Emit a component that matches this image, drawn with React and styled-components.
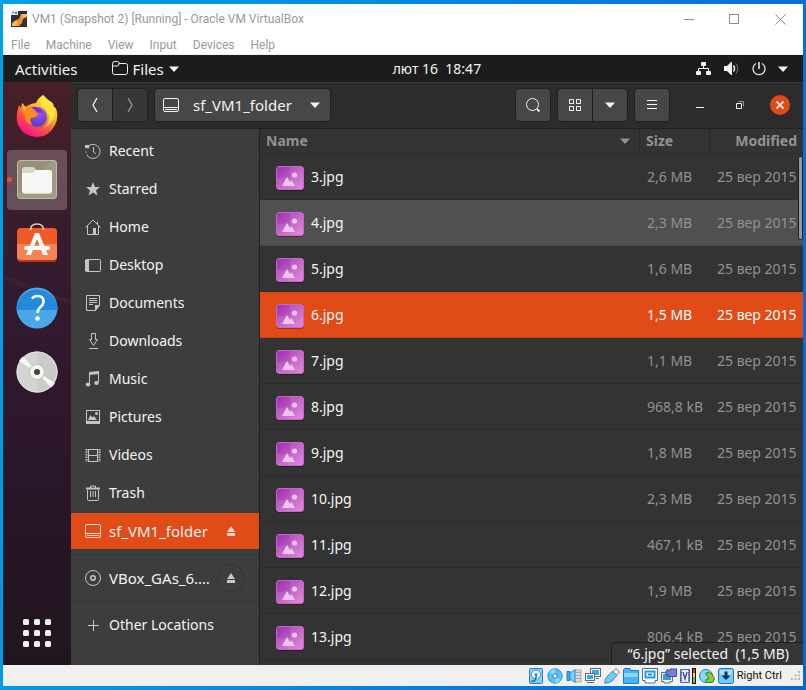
import React from 'react';
import styled, { createGlobalStyle } from 'styled-components';

const GlobalStyle = createGlobalStyle`
  *, *::before, *::after { box-sizing: border-box; }
  html, body, #root { height: 100%; }
  body { margin: 0; overflow: hidden; }
  button { font: inherit; color: inherit; background: none; border: 0; padding: 0; margin: 0; }
  a { color: inherit; text-decoration: none; }
  svg { display: block; flex: none; }
`;

const guestFont = '"Noto Sans", "Open Sans", sans-serif';
const hostFont = 'Roboto, "Open Sans", sans-serif';

/* ---------- Host desktop and window ---------- */

const Desktop = styled.div`
  height: 100vh;
  display: flex;
  padding: 4px 3px;
  background: linear-gradient(100deg, #00a2e8 0%, #0092e4 30%, #0878dc 70%, #0668cc 100%);
`;

const HostWindow = styled.main`
  flex: 1;
  min-width: 0;
  display: flex;
  flex-direction: column;
  background: #fff;
`;

const TitleBar = styled.header`
  display: flex;
  align-items: center;
  height: 30px;
  padding-left: 8px;
  gap: 5px;
  font-family: ${hostFont};
  font-size: 12px;
  color: #999;
`;

const Title = styled.h1`
  flex: 1;
  margin: 0;
  font-size: 12px;
  font-weight: 400;
  white-space: nowrap;
`;

const CaptionButtons = styled.div`
  display: flex;
  align-self: stretch;
`;

const CaptionButton = styled.button`
  width: 46px;
  display: flex;
  align-items: center;
  justify-content: center;
  color: #8c8c8c;
`;

const MenuBar = styled.nav`
  display: flex;
  align-items: center;
  gap: 16px;
  height: 21px;
  padding: 1px 0 0 8px;
  border-bottom: 1px solid #f0f0f0;
  font-family: ${hostFont};
  font-size: 12px;
  color: #999;
`;

/* ---------- Guest top panel ---------- */

const Guest = styled.section`
  flex: 1;
  min-height: 0;
  display: flex;
  flex-direction: column;
  font-family: ${guestFont};
  font-size: 14px;
  line-height: 20px;
  color: #f2f2f2;
`;

const TopPanel = styled.div`
  display: grid;
  grid-template-columns: 16fr auto 13fr;
  align-items: center;
  height: 27px;
  padding: 0 15px 0 12px;
  background: #1c1c1c;
`;

const PanelGroup = styled.div`
  display: flex;
  align-items: center;
  gap: ${(p) => p.$gap}px;
  justify-content: ${(p) => (p.$end ? 'flex-end' : 'flex-start')};
  font-size: 15px;
`;

const PanelButton = styled.button`
  display: flex;
  align-items: center;
  gap: 5px;
  white-space: pre;
`;

const GuestBody = styled.div`
  flex: 1;
  min-height: 0;
  display: flex;
`;

/* ---------- Dock ---------- */

const Dock = styled.nav`
  width: 68px;
  flex: none;
  display: flex;
  flex-direction: column;
  align-items: center;
  gap: 4px;
  padding: 4px 0 2px;
  background:
    linear-gradient(200deg, transparent 36%, rgba(120, 50, 60, 0.25) 36%, transparent 37%),
    linear-gradient(#472026 0%, #341b2f 32%, #2c172c 60%, #20151e 100%);
`;

const DockItem = styled.button`
  position: relative;
  width: 60px;
  height: 60px;
  display: flex;
  align-items: center;
  justify-content: center;
  border-radius: 4px;
  background: ${(p) => (p.$active ? 'rgba(255, 255, 255, 0.22)' : 'transparent')};
  margin-top: ${(p) => (p.$last ? 'auto' : 0)};
`;

const RunningDot = styled.span`
  position: absolute;
  left: 0;
  top: 50%;
  width: 5px;
  height: 5px;
  margin-top: -3px;
  border-radius: 50%;
  background: #e95420;
`;

/* ---------- File manager ---------- */

const FileManager = styled.div`
  flex: 1;
  min-width: 0;
  display: flex;
  flex-direction: column;
  background: #333;
`;

const HeaderBar = styled.div`
  display: flex;
  align-items: center;
  height: 47px;
  padding: 0 13px 2px 6px;
  gap: 6px;
  background: #2c2c2c;
  border-top: 1px solid #3b3b3b;
  border-bottom: 1px solid #212121;
`;

const ButtonGroup = styled.div`
  display: flex;
  border: 1px solid #202020;
  border-radius: 5px;
  overflow: hidden;
  background: #202020;
  gap: 1px;
`;

const ToolButton = styled.button`
  display: flex;
  align-items: center;
  justify-content: center;
  width: 34px;
  height: 32px;
  background: ${(p) => (p.$dim ? '#373737' : '#474747')};
  color: ${(p) => (p.$dim ? '#999' : '#f4f4f4')};
`;

const PathButton = styled.button`
  display: flex;
  align-items: center;
  width: 175px;
  height: 32px;
  padding: 0 10px 0 8px;
  gap: 14px;
  background: #474747;
  font-size: 15px;
`;

const PathLabel = styled.span`
  flex: 1;
  text-align: left;
`;

const Spacer = styled.span`
  flex: 1;
`;

const WindowControls = styled.div`
  display: flex;
  align-items: center;
  gap: 20px;
  padding-left: 14px;
`;

const ControlButton = styled.button`
  display: flex;
  align-items: center;
  justify-content: center;
  width: 20px;
  height: 20px;
  border-radius: 50%;
  background: ${(p) => (p.$close ? '#e04b17' : 'transparent')};
`;

const Content = styled.div`
  flex: 1;
  min-height: 0;
  display: flex;
`;

const Sidebar = styled.nav`
  width: 189px;
  flex: none;
  display: flex;
  flex-direction: column;
  gap: 2px;
  padding-top: 4px;
  background: #3d3d3d;
  border-right: 1px solid #212121;
`;

const Place = styled.div`
  display: flex;
  align-items: center;
  height: 36px;
  padding: 0 14px;
  background: ${(p) => (p.$selected ? '#e04b17' : 'transparent')};
  color: ${(p) => (p.$selected ? '#ffd9cc' : '#c6c6c6')};
  font-size: ${(p) => (p.$mounted ? 15 : 14)}px;
`;

const PlaceLink = styled.a`
  flex: 1;
  min-width: 0;
  display: flex;
  align-items: center;
  gap: 8px;
`;

const PlaceName = styled.span`
  color: #f4f4f4;
  white-space: nowrap;
`;

const EjectButton = styled.button`
  width: 28px;
  height: 28px;
  flex: none;
  display: flex;
  align-items: center;
  justify-content: center;
  border-radius: 50%;
  border: 1px solid ${(p) => (p.$outlined ? '#333' : 'transparent')};
`;

const Separator = styled.hr`
  width: 100%;
  height: 1px;
  margin: 3px 0;
  border: 0;
  background: #343434;
`;

const ListPane = styled.div`
  position: relative;
  flex: 1;
  min-width: 0;
  overflow: hidden;
`;

const FileTable = styled.table`
  width: 100%;
  table-layout: fixed;
  border-collapse: separate;
  border-spacing: 0;
`;

const HeadCell = styled.th`
  width: ${(p) => (p.$width ? `${p.$width}px` : 'auto')};
  height: 25px;
  padding: 0 6px;
  text-align: ${(p) => (p.$right ? 'right' : 'left')};
  font-weight: 700;
  color: #929292;
  border-bottom: 1px solid #2a2a2a;
  border-left: ${(p) => (p.$divided ? '1px solid #2a2a2a' : '0')};
`;

const HeadInner = styled.span`
  display: flex;
  align-items: center;
  justify-content: space-between;
  padding-right: 3px;
`;

const FileRow = styled.tr`
  background: ${(p) => ({ hover: '#505050', selected: '#e04b17' }[p.$state] || '#333')};
  --meta: ${(p) => (p.$state === 'selected' ? '#fff' : '#929292')};
`;

const Cell = styled.td`
  height: 46px;
  padding: ${(p) => (p.$name ? '0 16px' : '0 7px 0 8px')};
  text-align: ${(p) => (p.$right ? 'right' : 'left')};
  white-space: nowrap;
  color: ${(p) => (p.$name ? '#f6f6f6' : 'var(--meta)')};
  border-bottom: 1px solid rgba(0, 0, 0, 0.12);
`;

const FileName = styled.span`
  display: flex;
  align-items: center;
  gap: 7px;
`;

const ScrollThumb = styled.div`
  position: absolute;
  top: 27px;
  right: 0;
  width: 5px;
  height: 84px;
  border: 1px solid #1f1f1f;
  border-radius: 3px;
  background: #999;
`;

const FloatingStatus = styled.div`
  position: absolute;
  right: 0;
  bottom: 0;
  height: 23px;
  padding: 0 14px 0 15px;
  background: #353535;
  border: 1px solid #1f1f1f;
  border-width: 1px 0 0 1px;
  border-top-left-radius: 5px;
  line-height: 22px;
  white-space: pre;
`;

/* ---------- Host status bar ---------- */

const StatusBar = styled.footer`
  display: flex;
  align-items: center;
  justify-content: flex-end;
  height: 21px;
  gap: 3px;
  padding-right: 2px;
  background: #f0f0f0;
  font-family: ${hostFont};
  font-size: 11px;
  color: #111;
`;

const HostKey = styled.span`
  margin-right: 6px;
  white-space: nowrap;
`;

/* ---------- Icons ---------- */

const Svg = ({ w = 16, h = w, children, ...rest }) => (
  <svg width={w} height={h} viewBox={`0 0 ${w} ${h}`} fill="none" stroke="currentColor" aria-hidden="true" {...rest}>
    {children}
  </svg>
);

const Triangle = () => (
  <Svg w={10} h={6} stroke="none" fill="currentColor"><path d="M0 .5h10L5 6z" /></Svg>
);

const VmIcon = () => (
  <Svg w={16} stroke="none">
    <rect width="16" height="16" fill="#2b303b" />
    <path d="M10 3h6v3l-4 2-1 4-3 3H1v-3l4-3 3-1z" fill="#f7902b" />
    <path d="M11 3h5v2l-4 2zM1 14l3-4 3 1-2 4H1z" fill="#ffc15c" />
    <path d="M0 0h7v4H0z" fill="#e5e5e5" />
    <path d="M1 1h2v1H1zM4 1h2v2H4z" fill="#777" />
  </Svg>
);

const FolderOutline = () => (
  <Svg w={16} h={15}>
    <path d="M.5 4.500v-2a2 2 0 0 1 2-2h3a1.500 1.500 0 0 1 1.500 1.500v.5h6.500a2 2 0 0 1 2 2v7a2 2 0 0 1-2 2h-11a2 2 0 0 1-2-2zM.5 5h4.500q2 0 2-2.500" />
  </Svg>
);

const NetworkIcon = () => (
  <Svg w={16} h={14} fill="currentColor">
    <g stroke="none"><rect x="5" width="5" height="4" rx="1" /><rect y="9" width="5" height="4" rx="1" /><rect x="10" y="9" width="5" height="4" rx="1" /></g>
    <path d="M7.500 4v3M2.500 9V6.500h10V9" fill="none" />
  </Svg>
);

const VolumeIcon = () => (
  <Svg w={16} h={14}>
    <path d="M0 4h3l4-4h1v13H7L3 9H0z" fill="currentColor" stroke="none" />
    <path d="M9.500 3.500q2 3 0 6" strokeWidth="1.500" />
    <path d="M12 1.500q3.500 5 0 10" stroke="#777" />
  </Svg>
);

const PowerIcon = () => (
  <Svg w={14} h={14}><path d="M4 1.500a6 6 0 1 0 6 0" strokeWidth="1.200" /><path d="M7 0v7" strokeWidth="1.500" /></Svg>
);

const Chevron = ({ right }) => (
  <Svg w={8} h={16}><path d={right ? 'M2 1l4 7-4 7' : 'M6 1L2 8l4 7'} strokeWidth="1.300" /></Svg>
);

const DriveIcon = () => (
  <Svg w={16}>
    <rect x=".5" y="1.500" width="15" height="13" rx="1.500" />
    <path d="M1 10.500h14M2 12.500h12" />
  </Svg>
);

const SearchIcon = () => (
  <Svg w={16}><circle cx="7.500" cy="7.500" r="6" /><path d="M12 12l2.500 2.500" strokeWidth="1.800" /></Svg>
);

const GridIcon = () => (
  <Svg w={12}>
    <path d="M.5.5h4v4h-4zM7.500.5h4v4h-4zM.5 7.500h4v4h-4zM7.500 7.500h4v4h-4z" />
  </Svg>
);

const MenuIcon = () => (
  <Svg w={12} h={11}><path d="M1 1.500h10M1 5.500h10M1 9.500h10" /></Svg>
);

const placeIcons = {
  recent: (
    <Svg><path d="M2.200 4.500A7 7 0 1 1 1 8.500" strokeDasharray="36 2" /><path d="M8.500 4v5l2.500 2" /><path d="M0 2l4.500 0L4 5.500 0 5z" fill="currentColor" stroke="none" /></Svg>
  ),
  starred: (
    <Svg stroke="none" fill="currentColor"><path d="M8 1l2 5h5l-4 3.400 1.500 5L8 11.500l-4.500 2.900L5 9.400 1 6h5z" /></Svg>
  ),
  home: (
    <Svg><path d="M.5 8.500L8 1l7.500 7.500M2.500 7v8.500h11V7M12.500 5V2.500" /><path d="M8 9h3v6H8z" fill="currentColor" stroke="none" /></Svg>
  ),
  desktop: (
    <Svg><rect x=".5" y="2.500" width="15" height="12" rx="1" /><path d="M0 3h4v11H0z" fill="currentColor" stroke="none" /></Svg>
  ),
  documents: (
    <Svg><path d="M1.500.5h13v10l-4 5h-9z" /><path d="M4 3.500h8M4 5.500h8M4 7.500h8M4 9.500h4" /><path d="M10 10h5l-5 6z" fill="currentColor" stroke="none" /></Svg>
  ),
  downloads: (
    <Svg><path d="M6.500.5h4v6h2l-4 6-4-6h2zM4 15.500h9" /></Svg>
  ),
  music: (
    <Svg><path d="M4.500 13V3l9-1.500V11" /><path d="M4 1l10-1v3L4 4z" fill="currentColor" stroke="none" /><ellipse cx="3" cy="13.500" rx="2.300" ry="2" fill="currentColor" stroke="none" /><ellipse cx="11.500" cy="12" rx="2.300" ry="2" fill="currentColor" stroke="none" /></Svg>
  ),
  pictures: (
    <Svg><rect x="1.500" y="1.500" width="13" height="12" /><path d="M1 12h14v3H1zM3 11l2.500-5 2 2.500L9 7l3 4z" fill="currentColor" stroke="none" /><circle cx="11.500" cy="4.500" r="1.500" fill="currentColor" stroke="none" /></Svg>
  ),
  videos: (
    <Svg><path d="M3.500 2v13M12.500 2v13M3 2.500h10M3 8.500h10M3 14.500h10" /><path d="M1.500 2v13M14.500 2v13" strokeWidth="2" strokeDasharray="1.500 1" /></Svg>
  ),
  trash: (
    <Svg><path d="M2.500 5v9.500a1 1 0 0 0 1 1h9a1 1 0 0 0 1-1V5" /><path d="M1 3.500h14" strokeWidth="2" /><path d="M5.500 3V1h5v2M5.500 6v6M8 6v6M10.500 6v6" /></Svg>
  ),
  drive: <DriveIcon />,
  disc: (
    <Svg><circle cx="8" cy="8" r="7.500" /><circle cx="8" cy="8" r="2.200" strokeWidth="1.600" /></Svg>
  ),
  plus: (
    <Svg><path d="M3 8.500h11M8.500 3v11" /></Svg>
  ),
};

const EjectIcon = () => (
  <Svg w={8} h={10} stroke="none" fill="currentColor"><path d="M4 0l4 6H0zM0 7h8v3H0z" /></Svg>
);

const ImageIcon = () => (
  <Svg w={28} h={28} stroke="none">
    <defs>
      <linearGradient id="thumb" x1="0" y1="0" x2="1" y2="1"><stop offset="0" stopColor="#9c2fae" /><stop offset="1" stopColor="#e080da" /></linearGradient>
    </defs>
    <rect x="0" y="3" width="28" height="25" rx="3" fill="#000" opacity=".3" />
    <rect x=".5" y="3.500" width="27" height="23" rx="2.500" fill="url(#thumb)" stroke="#c566c8" />
    <path d="M14 4h13v22H14zM1 15h26v11H1z" fill="#fff" opacity=".09" />
    <path d="M6 23l5-9 3 5 1.500-2 3.500 6z" fill="#ecc6ea" />
    <circle cx="18.500" cy="12" r="2.600" fill="#ecc6ea" />
  </Svg>
);

const FirefoxIcon = () => (
  <Svg w={42} h={42} stroke="none">
    <defs>
      <linearGradient id="fox" x1=".8" y1=".05" x2=".25" y2=".95"><stop offset="0" stopColor="#fff14a" /><stop offset=".35" stopColor="#ffb52c" /><stop offset=".65" stopColor="#ff5640" /><stop offset="1" stopColor="#f5108e" /></linearGradient>
      <radialGradient id="globe" cx=".65" cy=".25" r=".8"><stop offset="0" stopColor="#a552f5" /><stop offset="1" stopColor="#4b3ec2" /></radialGradient>
    </defs>
    <path d="M27 0q3 4 7 6t4 6q2 0 3 5 1 8-2 13-6 12-18 12Q8 42 2.500 31-1 23 2 14l1-4 2 3 1-5 3 4q7-4 11-4 2-5 7-8z" fill="url(#fox)" />
    <circle cx="21" cy="22" r="10" fill="url(#globe)" />
    <path d="M6 8l5 5q6-1 9 4 2 1 2 3-2 3-7 3-2 3 2 7-8-1-8-9-5-4-3-13z" fill="#ff8a1d" />
    <path d="M6 8l4 5-2 4z" fill="#ffbd35" />
    <path d="M27 0q-4 6-2 10 6 4 8 11 1 7-5 12 10-5 11-16-2-4-2-5-3-6-10-12z" fill="#ffe93d" opacity=".85" />
    <path d="M21 12q-4-1-6 1 4 0 6 4 4 0 6 2-1-5-6-7z" fill="#7335c9" />
  </Svg>
);

const FilesIcon = () => (
  <Svg w={42} h={42} stroke="none">
    <rect x="1" y="2" width="40" height="40" rx="4" fill="#5e584b" />
    <rect x="1" y="1" width="40" height="39" rx="4" fill="#989179" />
    <path d="M1 36L37 1q4 0 4 4v31q0 4-4 4H5q-4 0-4-4z" fill="#a09a86" />
    <rect x="1.500" y="1.500" width="39" height="38" rx="3.500" stroke="#c0bba9" fill="none" />
    <path d="M6 31V11q0-3 3-3h8q2 0 3 3h13q3 0 3 3v18q0 3-3 3H9q-3 0-3-4z" fill="#d9d8ca" />
    <path d="M6 14h11l3-3h13q3 0 3 3v17q0 3-3 3H9q-3 0-3-3z" fill="#f8f8f7" />
  </Svg>
);

const SoftwareIcon = () => (
  <Svg w={42} h={42} stroke="none">
    <rect x="1" y="6" width="40" height="33" rx="4" fill="#b83813" />
    <rect x="1" y="5" width="40" height="32" rx="4" fill="#f05a24" />
    <path d="M1 21h40v12q0 4-4 4H5q-4 0-4-4z" fill="#f58353" />
    <path d="M14.500 7q0-6 6.500-6t6.500 6" stroke="#e8d0b0" strokeWidth="1.600" />
    <path d="M19 10h4l9 22h-5l-6-16-6 16h-5z" fill="#fff" />
    <rect x="8" y="23" width="26" height="4" rx="2" fill="#fff" />
  </Svg>
);

const HelpIcon = () => (
  <Svg w={42} h={42} stroke="none">
    <circle cx="21" cy="21" r="20.500" fill="#4aa7e8" />
    <path d="M.5 23a20.500 20.500 0 0 1 41 0z" fill="#2289dc" />
    <path d="M16 11.500q2-2.500 5.500-2.500 6 0 6 5.500 0 3-3 5.500-3 2.500-3 6" stroke="#fff" strokeWidth="2.600" />
    <circle cx="21.500" cy="31.500" r="2.300" fill="#fff" />
  </Svg>
);

const DiscIcon = () => (
  <Svg w={42} h={42} stroke="none">
    <circle cx="21" cy="21" r="20.500" fill="#d4d4d4" />
    <path d="M21 .5a20.500 20.500 0 0 1 0 41z" fill="#c4c4c4" opacity=".6" />
    <path d="M21 21L3 10q1.500-3 4-4.500zM21 21l18 11q-1.500 3-4 4.500z" fill="#f8f8f6" />
    <circle cx="21" cy="21" r="20" fill="none" stroke="#e4e4e4" />
    <circle cx="21" cy="21" r="7.500" fill="#f4f4f2" stroke="#c6bfae" />
    <circle cx="21" cy="21" r="3" fill="#444" />
  </Svg>
);

const AppsIcon = () => (
  <Svg w={28} h={28} stroke="none" fill="#eeeeec">
    {[0, 11, 22].map((y) => [0, 11, 22].map((x) => <rect key={`${x}-${y}`} x={x} y={y} width="6" height="6" rx="1.500" />))}
  </Svg>
);

const statusIcons = {
  'Hard disks': (
    <><rect x="1.500" y=".5" width="13" height="15" rx="1" fill="#7fd0fa" stroke="#2b7fc4" /><circle cx="8" cy="6.500" r="4.500" fill="#fff" stroke="#2b8fd8" /><circle cx="8" cy="6.500" r="1.500" fill="#1b8bdb" stroke="none" /><path d="M3 13.500l3.500-.5 2-5" stroke="#246fa8" strokeWidth="1.500" /></>
  ),
  'Optical drives': (
    <><circle cx="8" cy="8" r="7.200" fill="#52c3fa" stroke="#2b95d8" /><path d="M8 8L2.500 4Q5 1 8 1zM8 8l5.500 4Q11 15 8 15z" fill="#8bdcfe" stroke="none" /><circle cx="8" cy="8" r="2.200" fill="#fff" stroke="#1b75b9" /></>
  ),
  Audio: (
    <><path d="M9 2h6v12H9zM10 4.500h5M10 7.500h5M10 10.500h5" fill="#ddd" stroke="#a9a9a9" /><path d="M1 3.500h3v9H1z" fill="#37abf2" stroke="#2a7fb9" /><path d="M4 5l5-3.500v13L4 11z" fill="#7fd3fb" stroke="#2a8fd0" /></>
  ),
  Network: (
    <><rect x="5.500" y=".5" width="10" height="8" fill="#fff" stroke="#667" /><path d="M7 2h7v5H7z" fill="#35a9ef" stroke="none" /><path d="M11 10.500h3" stroke="#667" /><rect x=".5" y="5.500" width="9" height="7" fill="#fff" stroke="#667" /><path d="M2 7h6v4H2z" fill="#35a9ef" stroke="none" /><path d="M2 14.500h7" stroke="#667" /></>
  ),
  USB: (
    <><path d="M9 3l4 4-5 6Q4.500 15.500.8 15.200.5 11 3 8.500z" fill="#6ccbf9" stroke="#2f8cc7" /><path d="M9 3.500l3-3L15.500 4l-3 3z" fill="#fff" stroke="#777" /></>
  ),
  'Shared folders': (
    <><path d="M.5 1.500v14h15V2.500H8l-1-2H1.500z" fill="#45b5f5" stroke="#167fcb" /><path d="M1 5h14v4H1z" fill="#8bd5fc" stroke="none" /></>
  ),
  Display: (
    <><path d="M.5.500h15v12H13v2.500H3v-2.500H.5z" fill="#fff" stroke="#656b72" /><rect x="3.500" y="3.500" width="9" height="6" fill="#fff" stroke="#1f9bec" strokeWidth="2" /><rect x="6" y="5.500" width="4" height="2" fill="#1685d4" stroke="none" /></>
  ),
  Recording: (
    <><path d="M.5 4.500h11v9H9V15H3v-1.500H.5z" fill="#fff" stroke="#656b72" /><path d="M2 6h8v6H2z" fill="#2f9fea" stroke="none" /><path d="M5 3l2-2v2h2V1h6.500v7.500H7V6L5 7z" fill="#7681d8" stroke="#434c9c" /></>
  ),
  Processor: (
    <><rect x="0" y="1" width="10" height="14" rx="1" fill="#5a60ac" stroke="none" /><path d="M1 3.500h8M1 6h8M1 8.500h8M1 11h8M1 13.500h8" stroke="#b9bdea" /><rect x="2" y="2" width="6" height="12" fill="#eceefd" stroke="none" /><path d="M3 4l2 7 2-7" stroke="#3943a1" strokeWidth="1.300" /><path d="M12 0h4v16h-4z" fill="#111" stroke="none" /><path d="M13 1h2v4h-2z" fill="#e93323" stroke="none" /><path d="M13 5h2v4h-2z" fill="#f7e12e" stroke="none" /><path d="M13 9h2v6h-2z" fill="#54d136" stroke="none" /></>
  ),
  Mouse: (
    <><circle cx="7" cy="8" r="6.500" fill="#87d7fa" stroke="#2581b9" /><path d="M8 4l5 2 2.500 5-2 3.500H8L6.500 12l3-1L9 8 6.500 6z" fill="#86d03f" stroke="#3c7f17" /></>
  ),
  Keyboard: (
    <><rect x=".5" y=".5" width="15" height="15" rx="2" fill="#6fcbf8" stroke="#2474ae" /><path d="M2 2h12v5H2z" fill="#a6e0fc" stroke="none" /><path d="M6.500 3.500h3v4h3L8 12 3.500 7.500h3z" fill="#0c3563" stroke="none" /></>
  ),
};

const Grip = () => (
  <Svg w={10} stroke="none" fill="#b5b5b5"><path d="M7 0h2v2H7zM7 3.500h2v2H7zM7 7h2v2H7zM3.500 3.500h2v2h-2zM3.500 7h2v2h-2zM0 7h2v2H0z" /></Svg>
);

/* ---------- Data ---------- */

const menus = ['File', 'Machine', 'View', 'Input', 'Devices', 'Help'];

const places = [
  ['recent', 'Recent'],
  ['starred', 'Starred'],
  ['home', 'Home'],
  ['desktop', 'Desktop'],
  ['documents', 'Documents'],
  ['downloads', 'Downloads'],
  ['music', 'Music'],
  ['pictures', 'Pictures'],
  ['videos', 'Videos'],
  ['trash', 'Trash'],
];

const files = [
  ['3.jpg', '2,6 MB'],
  ['4.jpg', '2,3 MB', 'hover'],
  ['5.jpg', '1,6 MB'],
  ['6.jpg', '1,5 MB', 'selected'],
  ['7.jpg', '1,1 MB'],
  ['8.jpg', '968,8 kB'],
  ['9.jpg', '1,8 MB'],
  ['10.jpg', '2,3 MB'],
  ['11.jpg', '467,1 kB'],
  ['12.jpg', '1,9 MB'],
  ['13.jpg', '806,4 kB'],
];

function PlaceRow({ icon, name, selected, eject, outlined }) {
  return (
    <Place $selected={selected} $mounted={eject}>
      <PlaceLink href="#">{placeIcons[icon]}<PlaceName>{name}</PlaceName></PlaceLink>
      {eject && <EjectButton aria-label={`Eject ${name}`} $outlined={outlined}><EjectIcon /></EjectButton>}
    </Place>
  );
}

export default function App() {
  return (
    <Desktop>
      <GlobalStyle />
      <HostWindow>
        <TitleBar>
          <VmIcon />
          <Title>VM1 (Snapshot 2) [Running] - Oracle VM VirtualBox</Title>
          <CaptionButtons>
            <CaptionButton aria-label="Minimize"><Svg w={11}><path d="M1 5.500h10" /></Svg></CaptionButton>
            <CaptionButton aria-label="Maximize"><Svg w={11}><rect x=".5" y=".5" width="9" height="9" /></Svg></CaptionButton>
            <CaptionButton aria-label="Close"><Svg w={11}><path d="M.5.5l10 10M10.500.5l-10 10" /></Svg></CaptionButton>
          </CaptionButtons>
        </TitleBar>
        <MenuBar aria-label="Machine menu">
          {menus.map((m) => <button key={m}>{m}</button>)}
        </MenuBar>

        <Guest>
          <TopPanel>
            <PanelGroup $gap={34}>
              <PanelButton>Activities</PanelButton>
              <PanelButton><FolderOutline />Files<Triangle /></PanelButton>
            </PanelGroup>
            <PanelButton>{'лют 16  18:47'}</PanelButton>
            <PanelGroup $gap={12} $end>
              <NetworkIcon /><VolumeIcon /><PowerIcon /><Triangle />
            </PanelGroup>
          </TopPanel>

          <GuestBody>
            <Dock aria-label="Dock">
              <DockItem aria-label="Firefox"><FirefoxIcon /></DockItem>
              <DockItem aria-label="Files" $active><RunningDot /><FilesIcon /></DockItem>
              <DockItem aria-label="Software"><SoftwareIcon /></DockItem>
              <DockItem aria-label="Help"><HelpIcon /></DockItem>
              <DockItem aria-label="Disc"><DiscIcon /></DockItem>
              <DockItem aria-label="Show applications" $last><AppsIcon /></DockItem>
            </Dock>

            <FileManager>
              <HeaderBar>
                <ButtonGroup>
                  <ToolButton aria-label="Back"><Chevron /></ToolButton>
                  <ToolButton aria-label="Forward" $dim><Chevron right /></ToolButton>
                </ButtonGroup>
                <ButtonGroup>
                  <PathButton><DriveIcon /><PathLabel>sf_VM1_folder</PathLabel><Triangle /></PathButton>
                </ButtonGroup>
                <Spacer />
                <ButtonGroup><ToolButton aria-label="Search"><SearchIcon /></ToolButton></ButtonGroup>
                <ButtonGroup>
                  <ToolButton aria-label="Grid view"><GridIcon /></ToolButton>
                  <ToolButton aria-label="View options"><Triangle /></ToolButton>
                </ButtonGroup>
                <ButtonGroup><ToolButton aria-label="Menu"><MenuIcon /></ToolButton></ButtonGroup>
                <WindowControls>
                  <ControlButton aria-label="Minimize window"><Svg w={8}><path d="M0 6.500h8" /></Svg></ControlButton>
                  <ControlButton aria-label="Restore window"><Svg w={8}><path d="M2.500 .5h5v5" stroke="#999" /><path d="M.5 2.500h5v5h-5z" /></Svg></ControlButton>
                  <ControlButton aria-label="Close window" $close><Svg w={8}><path d="M.5.5l7 7M7.500.5l-7 7" strokeWidth="1.600" /></Svg></ControlButton>
                </WindowControls>
              </HeaderBar>

              <Content>
                <Sidebar aria-label="Places">
                  {places.map(([icon, name]) => <PlaceRow key={name} icon={icon} name={name} />)}
                  <PlaceRow icon="drive" name="sf_VM1_folder" selected eject />
                  <Separator />
                  <PlaceRow icon="disc" name="VBox_GAs_6.…" eject outlined />
                  <Separator />
                  <PlaceRow icon="plus" name="Other Locations" />
                </Sidebar>

                <ListPane>
                  <FileTable>
                    <thead>
                      <tr>
                        <HeadCell><HeadInner>Name<Triangle /></HeadInner></HeadCell>
                        <HeadCell $width={70} $divided>Size</HeadCell>
                        <HeadCell $width={94} $divided $right>Modified</HeadCell>
                      </tr>
                    </thead>
                    <tbody>
                      {files.map(([name, size, state]) => (
                        <FileRow key={name} $state={state}>
                          <Cell $name><FileName><ImageIcon />{name}</FileName></Cell>
                          <Cell>{size}</Cell>
                          <Cell $right>25 вер 2015</Cell>
                        </FileRow>
                      ))}
                    </tbody>
                  </FileTable>
                  <ScrollThumb />
                  <FloatingStatus role="status">{'“6.jpg” selected  (1,5 MB)'}</FloatingStatus>
                </ListPane>
              </Content>
            </FileManager>
          </GuestBody>
        </Guest>

        <StatusBar>
          {Object.entries(statusIcons).map(([name, art]) => (
            <Svg key={name}>{art}</Svg>
          ))}
          <HostKey>Right Ctrl</HostKey>
          <Grip />
        </StatusBar>
      </HostWindow>
    </Desktop>
  );
}
